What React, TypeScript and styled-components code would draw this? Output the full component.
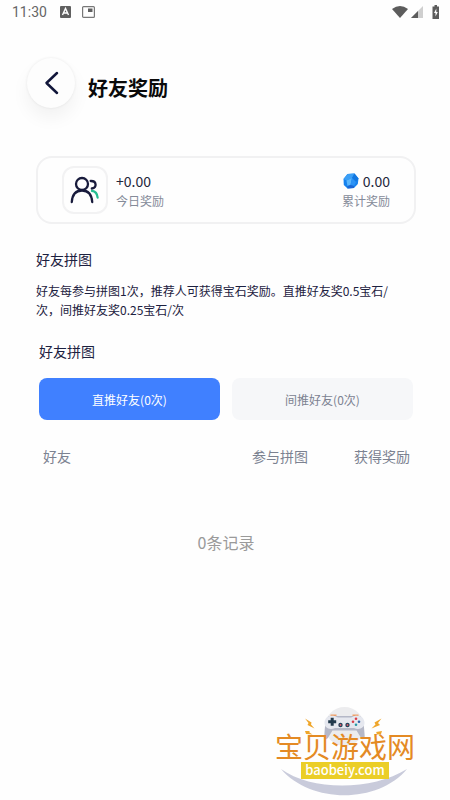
import React, { useState } from 'react';
import styled, { createGlobalStyle } from 'styled-components';

const GlobalStyle = createGlobalStyle`
  * { box-sizing: border-box; }
  body {
    margin: 0;
    background: #fefefe;
    color: #1c2140;
    font-family: "Noto Sans CJK SC", sans-serif;
  }
  button { font-family: inherit; cursor: pointer; }
`;

const Page = styled.div`
  display: flex;
  flex-direction: column;
  min-height: 100vh;
`;

const StatusBar = styled.div`
  display: flex;
  align-items: center;
  justify-content: space-between;
  height: 24px;
  padding: 0 10px 0 12px;
  color: #666;
  font: 14px/24px Roboto, sans-serif;
`;

const StatusGroup = styled.div<{ $gap: number }>`
  display: flex;
  align-items: center;
  gap: ${(p) => p.$gap}px;
`;

const Time = styled.span`
  margin-right: 2px;
`;

const Header = styled.header`
  display: flex;
  align-items: center;
  gap: 13px;
  padding: 34px 27px 0;
`;

const BackButton = styled.button`
  display: flex;
  align-items: center;
  justify-content: center;
  width: 48px;
  height: 50px;
  padding: 0;
  border: 0;
  border-radius: 50%;
  background: #fdfdfd;
  box-shadow: 0 0 3px rgba(0, 0, 0, 0.08), 0 10px 18px rgba(0, 0, 0, 0.05);
`;

const Title = styled.h1`
  margin: 10px 0 0;
  color: #0a0a0a;
  font-size: 20px;
  font-weight: 700;
  line-height: 28px;
`;

const Main = styled.main`
  padding: 48px 34px 0 36px;
`;

const SummaryCard = styled.section`
  display: flex;
  align-items: center;
  justify-content: space-between;
  height: 68px;
  padding: 0 24px;
  border: 2px solid #f1f1f2;
  border-radius: 16px;
`;

const Today = styled.div`
  display: flex;
  align-items: center;
  gap: 8px;
`;

const IconFrame = styled.div`
  display: flex;
  align-items: center;
  justify-content: center;
  width: 46px;
  height: 48px;
  border: 2px solid #f2f2f3;
  border-radius: 12px;
`;

const Stat = styled.div<{ $end?: boolean }>`
  display: flex;
  flex-direction: column;
  align-items: ${(p) => (p.$end ? 'flex-end' : 'flex-start')};
  padding-top: 2px;
`;

const Amount = styled.div`
  display: flex;
  align-items: center;
  gap: 4px;
  color: #24283c;
  font-size: 14px;
  line-height: 20px;
`;

const Caption = styled.div`
  color: #858b99;
  font-size: 12px;
  line-height: 20px;
`;

const Rules = styled.section`
  padding-top: 25px;
`;

const SectionTitle = styled.h2`
  margin: 0;
  font-size: 14px;
  font-weight: 400;
  line-height: 20px;
`;

const RuleText = styled.p`
  margin: 12px 0 0;
  padding-right: 20px;
  font-size: 12px;
  line-height: 19px;
`;

const Records = styled.section`
  padding: 22px 3px 0;
`;

const Tabs = styled.div`
  display: grid;
  grid-template-columns: 1fr 1fr;
  gap: 12px;
  padding-top: 17px;
`;

const Tab = styled.button<{ $active: boolean }>`
  height: 42px;
  padding: 0;
  border: 0;
  border-radius: 8px;
  background: ${(p) => (p.$active ? '#4080ff' : '#f6f7f9')};
  color: ${(p) => (p.$active ? '#fff' : '#7c8291')};
  font-size: 12px;
`;

const Table = styled.table`
  width: 100%;
  margin-top: 26px;
  border-collapse: collapse;
`;

const HeadCell = styled.th<{ $align?: string; $width?: string }>`
  width: ${(p) => p.$width ?? 'auto'};
  padding: 0 3px 0 4px;
  color: #7c8291;
  font-size: 14px;
  font-weight: 400;
  line-height: 20px;
  text-align: ${(p) => p.$align ?? 'left'};
`;

const EmptyCell = styled.td`
  padding: 64px 0 0;
  color: #9a9a9a;
  font-size: 16px;
  line-height: 24px;
  text-align: center;
`;

const Footer = styled.footer`
  display: flex;
  justify-content: flex-end;
  margin-top: auto;
  padding: 0 35px 4px 0;
`;

const Brand = styled.a`
  position: relative;
  display: flex;
  flex-direction: column;
  align-items: center;
  width: 140px;
  height: 89px;
  padding-top: 24px;
  text-decoration: none;
`;

const BrandArt = styled.svg`
  position: absolute;
  inset: 0;
`;

const BrandName = styled.span`
  position: relative;
  color: #e48a24;
  font-size: 28px;
  line-height: 31px;
  white-space: nowrap;
`;

const BrandDomain = styled.span`
  position: relative;
  height: 17px;
  padding: 0 4px;
  background: #ebce27;
  color: #fff;
  font-size: 13px;
  font-weight: 500;
  line-height: 16px;
`;

const StatusIcon = ({ kind }: { kind: 'input' | 'window' }) =>
  kind === 'input' ? (
    <svg width="11" height="12" viewBox="0 0 11 12" aria-hidden="true">
      <rect width="11" height="12" rx="1" fill="#606060" />
      <path d="M2.5 9 5.5 2.5 8.5 9M3.8 7h3.4" stroke="#fff" strokeWidth="1.4" fill="none" />
    </svg>
  ) : (
    <svg width="13" height="12" viewBox="0 0 13 12" aria-hidden="true">
      <rect x=".6" y=".6" width="11.8" height="10.8" rx="1" fill="none" stroke="#777" strokeWidth="1.2" />
      <rect x="6" y="2.5" width="4.5" height="3.5" fill="#606060" />
    </svg>
  );

const SignalIcons = () => (
  <StatusGroup $gap={3}>
    <svg width="16" height="12" viewBox="0 0 16 12" aria-hidden="true">
      <path d="M0 3Q8-3 16 3L8 12Z" fill="#5c5c5c" />
    </svg>
    <svg width="12" height="12" viewBox="0 0 12 12" aria-hidden="true">
      <path d="M12 0V12H0Z" fill="#cfcfcf" />
      <path d="M7 5V12H0Z" fill="#5c5c5c" />
    </svg>
    <svg width="14" height="14" viewBox="0 0 14 14" aria-hidden="true">
      <path d="M6.500 1.500h2V0h2.500v1.500h2V14H6.500Z" fill="#5c5c5c" />
      <path d="M10.300 3.500 8 8h1.500v3.500L11.800 7h-1.500Z" fill="#fff" />
    </svg>
  </StatusGroup>
);

const BackIcon = () => (
  <svg width="16" height="24" viewBox="0 0 16 24" fill="none" aria-hidden="true">
    <path d="M14 2 3.500 12 14 22" stroke="#11163a" strokeWidth="2.5" strokeLinecap="round" strokeLinejoin="round" />
  </svg>
);

const FriendsIcon = () => (
  <svg width="30" height="28" viewBox="0 0 30 28" fill="none" strokeWidth="2.3" strokeLinecap="round" aria-hidden="true">
    <circle cx="12" cy="8" r="6" stroke="#181b3c" />
    <path d="M1.800 26C2.300 18.500 6.200 14.500 12 14.500S21.700 18.500 22.200 26" stroke="#181b3c" />
    <path d="M20.700 5C26.800 4.800 27.200 11.500 21.800 12.500" stroke="#181b3c" />
    <path d="M22 14.800C25.800 15.300 27.300 18 27.600 21.500" stroke="#25bd91" />
  </svg>
);

const GemIcon = () => (
  <svg width="16" height="16" viewBox="0 0 16 16" aria-hidden="true">
    <path d="M4.5 1 11.5.5 15.5 5.5 14.8 11 11 15 4.5 15.5.8 12 .5 6Z" fill="#1682ee" />
    <path d="M4.5 1 11.5.5 9 5 3.5 7.5.5 6Z" fill="#3b9ff6" />
    <path d="M9 5 11.5.5 15.5 5.5 13 9Z" fill="#1277e0" />
    <path d="M3.5 7.5 9 5 7.5 12 4.5 13Z" fill="#5bb6fb" />
    <path d="M9 5 13 9 11 13 7.5 12Z" fill="#2b92f5" />
    <path d="M4.5 13 7.5 12 11 13 11 15 4.5 15.5Z" fill="#1a66d4" />
  </svg>
);

const BrandDrawing = () => (
  <BrandArt width="140" height="89" viewBox="0 0 140 89" aria-hidden="true">
    <circle cx="69.500" cy="19.500" r="19.500" fill="#ececee" />
    <path d="M55.500 8.300h6M77.500 8.300h6" stroke="#eda06a" strokeWidth="1.500" />
    <path d="M55 9H84C88 9 89 17 89.700 29C89.700 33 87 33 85.500 30L81.500 23.500H57.500L53.500 30C52 33 49.300 33 49.300 29C50 17 51 9 55 9Z" fill="#b5b8c7" />
    <path d="M57 8.800C61 8.800 61 10.500 64 10.500H75C78 10.500 78 8.800 82 8.800C87 8.800 89.500 12 89.500 16C89.500 21 84 23.500 79 21H60C55 23.500 49.500 21 49.500 16C49.500 12 52 8.800 57 8.800Z" fill="#e6e8ef" />
    <path d="M55.700 10.700h3v2.500h2.500v3h-2.500v2.500h-3v-2.500h-2.500v-3h2.500Z" fill="#223a4c" />
    <circle cx="81" cy="11.700" r="1.300" fill="#da3d48" />
    <circle cx="81" cy="17.700" r="1.300" fill="#2898a6" />
    <circle cx="78" cy="14.700" r="1.300" fill="#da3d48" />
    <circle cx="84" cy="14.700" r="1.300" fill="#2f63a8" />
    <circle cx="65.500" cy="18" r="2.200" fill="#254358" />
    <circle cx="72.500" cy="18" r="2.200" fill="#254358" />
    <circle cx="65.500" cy="18" r=".9" fill="#e25868" />
    <circle cx="72.500" cy="18" r=".9" fill="#e25868" />
    <g fill="#efa62b">
      <path d="M30 11.500 36.500 15.500 36 17.500 39.500 21.500 32.500 18 33.500 16Z" />
      <path d="M30 24 34.500 24 34.500 25.500 37.500 27.500 31 27Z" />
      <path d="M106.500 11.500 99.500 15.500 100.500 17.500 96.500 21.500 105 18 103 16Z" />
      <path d="M107 24 101 25 102 26.500 99 28 106 27Z" />
    </g>
    <path d="M6 62C36 84 97 84 132 62C103 97 36 97 6 62Z" fill="#c9cbdb" />
  </BrandArt>
);

const tabs = ['直推好友(0次)', '间推好友(0次)'];

export default function App() {
  const [active, setActive] = useState(0);

  return (
    <>
      <GlobalStyle />
      <Page>
        <StatusBar>
          <StatusGroup $gap={11}>
            <Time>11:30</Time>
            <StatusIcon kind="input" />
            <StatusIcon kind="window" />
          </StatusGroup>
          <SignalIcons />
        </StatusBar>
        <Header>
          <BackButton type="button" aria-label="返回">
            <BackIcon />
          </BackButton>
          <Title>好友奖励</Title>
        </Header>
        <Main>
          <SummaryCard>
            <Today>
              <IconFrame>
                <FriendsIcon />
              </IconFrame>
              <Stat>
                <Amount>+0.00</Amount>
                <Caption>今日奖励</Caption>
              </Stat>
            </Today>
            <Stat $end>
              <Amount>
                <GemIcon />
                0.00
              </Amount>
              <Caption>累计奖励</Caption>
            </Stat>
          </SummaryCard>
          <Rules>
            <SectionTitle>好友拼图</SectionTitle>
            <RuleText>
              好友每参与拼图1次，推荐人可获得宝石奖励。直推好友奖0.5宝石/次，间推好友奖0.25宝石/次
            </RuleText>
          </Rules>
          <Records>
            <SectionTitle>好友拼图</SectionTitle>
            <Tabs role="tablist">
              {tabs.map((label, i) => (
                <Tab
                  key={label}
                  type="button"
                  role="tab"
                  aria-selected={i === active}
                  $active={i === active}
                  onClick={() => setActive(i)}
                >
                  {label}
                </Tab>
              ))}
            </Tabs>
            <Table>
              <thead>
                <tr>
                  <HeadCell scope="col">好友</HeadCell>
                  <HeadCell scope="col" $width="63px">参与拼图</HeadCell>
                  <HeadCell scope="col" $width="102px" $align="right">获得奖励</HeadCell>
                </tr>
              </thead>
              <tbody>
                <tr>
                  <EmptyCell colSpan={3}>0条记录</EmptyCell>
                </tr>
              </tbody>
            </Table>
          </Records>
        </Main>
        <Footer>
          <Brand href="#">
            <BrandDrawing />
            <BrandName>宝贝游戏网</BrandName>
            <BrandDomain>baobeiy.com</BrandDomain>
          </Brand>
        </Footer>
      </Page>
    </>
  );
}
